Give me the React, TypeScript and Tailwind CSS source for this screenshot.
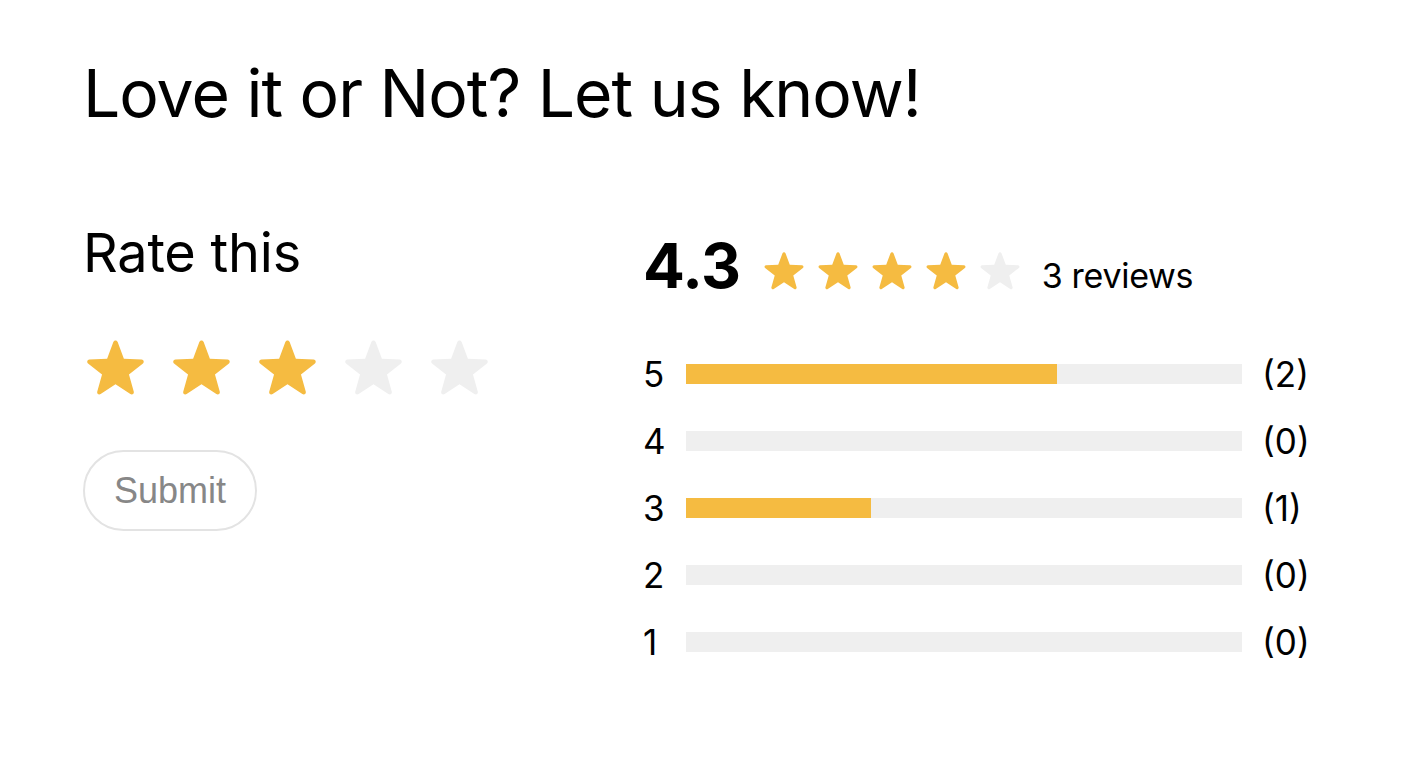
import React from 'react'

const YELLOW = '#f5bb41'

function Star({ filled, size }: { filled: boolean; size: number }) {
  return (
    <svg width={size} height={size} viewBox="0 0 24 24" className="block shrink-0">
      <path
        d="M12 1.8c.4 0 .7.25.85.6l2.45 6.55 7 .3c.8.05 1.1 1.05.5 1.55l-5.5 4.35 1.9 6.75c.2.8-.65 1.4-1.350.95L12 19l-5.85 3.85c-.7.45-1.55-.15-1.35-.95l1.9-6.75-5.5-4.35c-.6-.5-.3-1.5.5-1.55l7-.3 2.45-6.55c.15-.35.45-.6.85-.6z"
        fill={filled ? YELLOW : '#efefef'}
      />
    </svg>
  )
}

const rows = [
  { label: 5, count: 2 },
  { label: 4, count: 0 },
  { label: 3, count: 1 },
  { label: 2, count: 0 },
  { label: 1, count: 0 },
]

export default function App() {
  const total = 3
  return (
    <div className="min-h-screen bg-white text-black" style={{ fontFamily: 'Inter, "Noto Sans", sans-serif' }}>
      <div className="px-[83px] pt-[60px]">
        <h1 className="text-[66px] leading-[66px] font-normal tracking-[-1px]">Love it or Not? Let us know!</h1>

        <div className="mt-[100px] flex">
          {/* Rate this */}
          <div className="w-[560px] shrink-0">
            <h2 className="text-[54px] leading-[54px] tracking-[-0.2px]">Rate this</h2>
            <div className="mt-[56px] ml-[2px] flex gap-[25px]">
              {[1, 2, 3, 4, 5].map((i) => (
                <Star key={i} filled={i <= 3} size={61} />
              ))}
            </div>
            <button
              className="mt-[53px] h-[81px] w-[174px] rounded-full border-2 border-[#e3e3e3] text-[36px] text-[#878787]"
              style={{ fontFamily: '"Liberation Sans", Arial, sans-serif' }}
            >
              Submit
            </button>
          </div>

          {/* Summary */}
          <div className="w-[680px] pt-[9px]">
            <div className="flex items-start">
              <span className="text-[62px] leading-[62px] font-bold tracking-[-0.5px]">4.3</span>
              <div className="ml-[22px] mt-[14px] flex gap-[12px]">
                {[1, 2, 3, 4, 5].map((i) => (
                  <Star key={i} filled={i <= 4} size={42} />
                ))}
              </div>
              <span className="ml-[21px] mt-[24px] text-[34px] leading-[34px] tracking-[-0.3px]">3 reviews</span>
            </div>
            <div className="mt-[67px] flex flex-col gap-[47px]">
              {rows.map((r) => (
                <div key={r.label} className="flex h-[20px] items-center">
                  <span className="w-[43px] text-[35px] leading-none">{r.label}</span>
                  <div className="h-[20px] w-[556px] bg-[#efefef]">
                    <div className="h-full" style={{ width: `${(r.count / total) * 100}%`, backgroundColor: YELLOW }} />
                  </div>
                  <span className="ml-[20px] text-[35px] leading-none">({r.count})</span>
                </div>
              ))}
            </div>
          </div>
        </div>
      </div>
    </div>
  )
}
